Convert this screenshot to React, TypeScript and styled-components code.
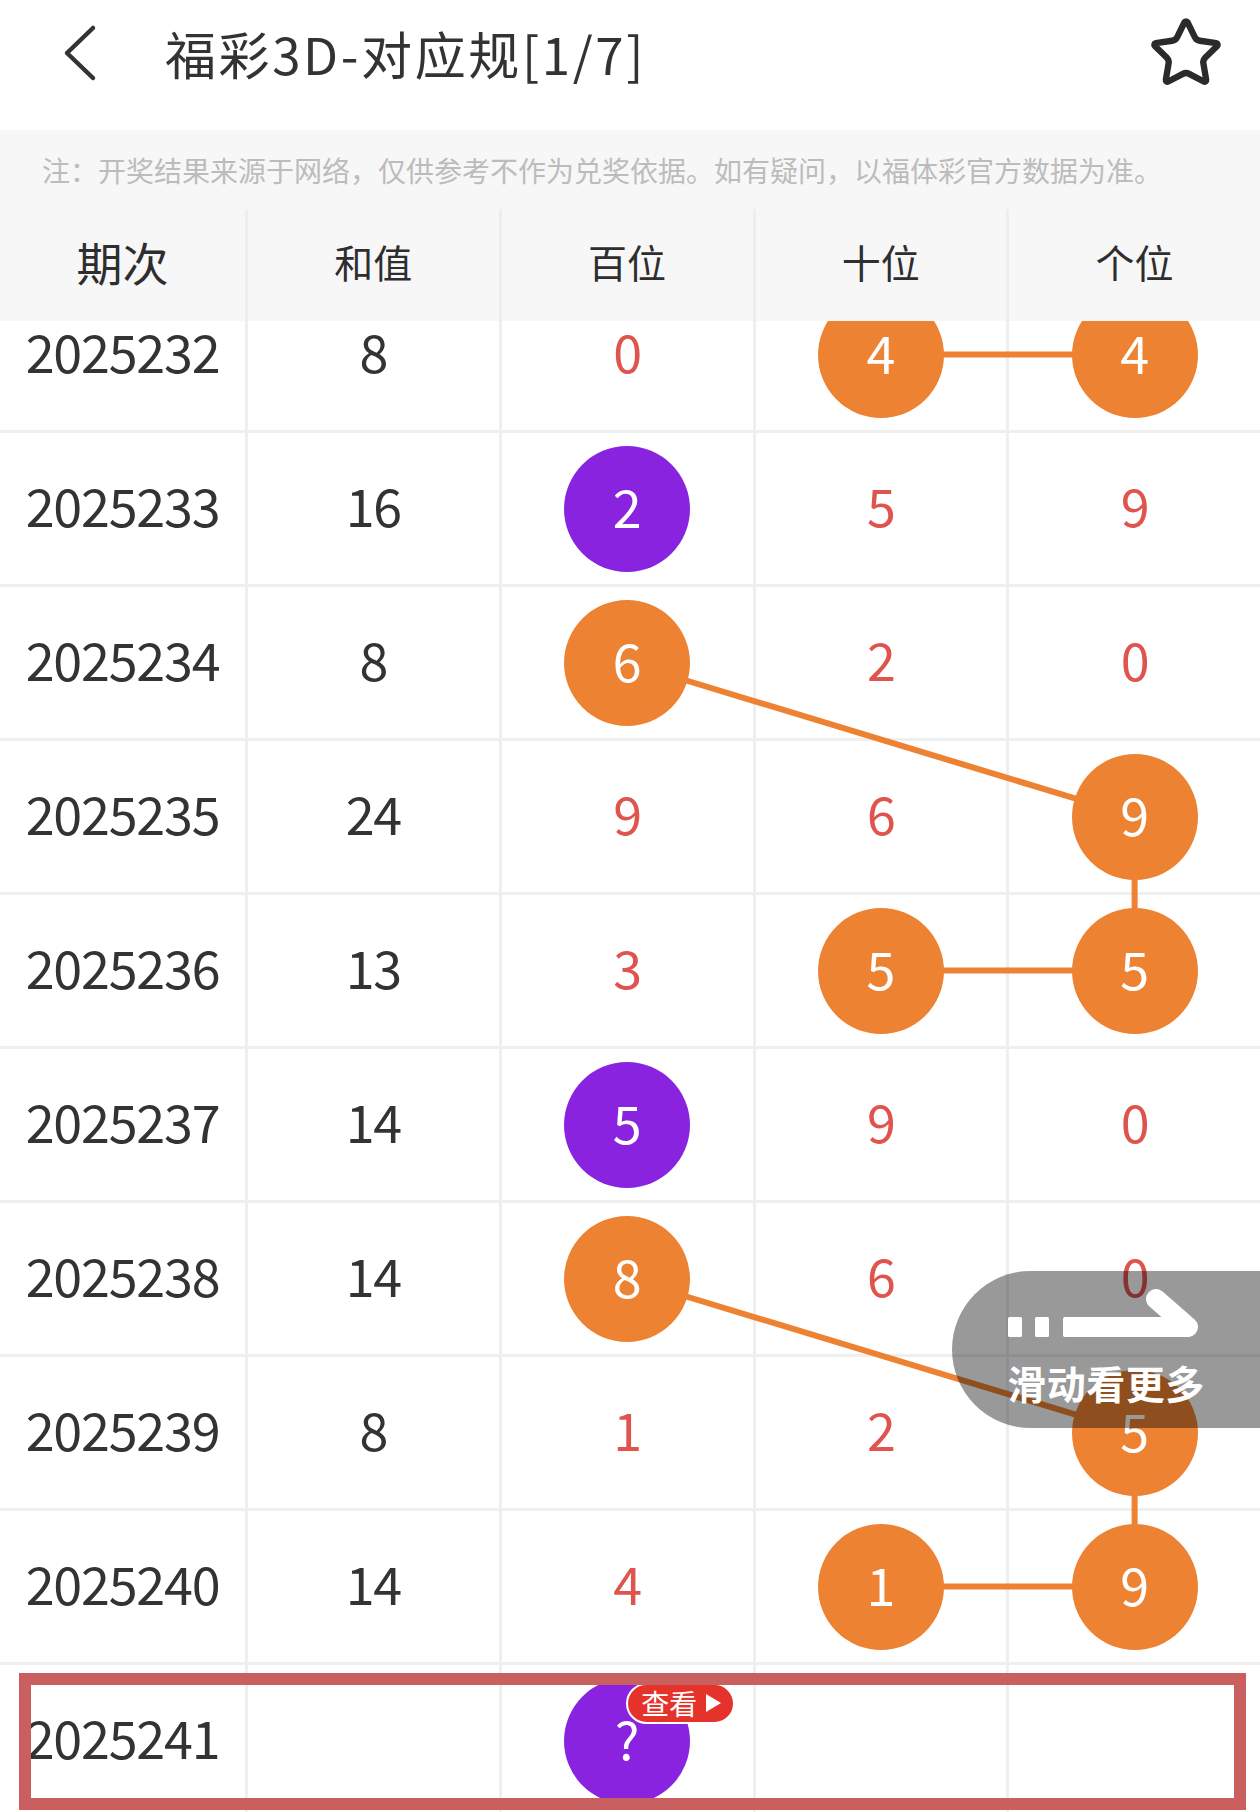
import React from 'react';
import styled, { createGlobalStyle } from 'styled-components';

const GlobalStyle = createGlobalStyle`
  html, body {
    margin: 0;
    padding: 0;
    background: #ffffff;
  }
  body {
    font-family: "Noto Sans CJK SC", "Noto Sans", sans-serif;
    color: #333333;
  }
  * { box-sizing: border-box; }
`;

const ORANGE = '#ed8232';
const PURPLE = '#8a23e0';
const RED_TEXT = '#e0544e';
const GRID_LINE = '#efefef';

const FIRST_COL = 245;
const GAP = 3;
const ROW_H = 151;
const PAGE_W = 1260;
const COL_W = (PAGE_W - FIRST_COL - GAP * 4) / 4;

const Page = styled.div`
  position: relative;
  width: 1260px;
  height: 1812px;
  overflow: hidden;
  display: flex;
  flex-direction: column;
  background: #ffffff;
`;

const TopBar = styled.header`
  height: 130px;
  flex: none;
  display: flex;
  align-items: center;
  padding: 0 36px 24px 60px;
  background: #ffffff;
`;

const BackIcon = styled.svg`
  width: 40px;
  height: 60px;
  flex: none;
`;

const Title = styled.h1`
  margin: 0 0 0 65px;
  font-size: 51px;
  font-weight: 400;
  color: #333333;
  letter-spacing: 2.6px;
  line-height: 1;
`;

const StarIcon = styled.svg`
  margin-left: auto;
  width: 76px;
  height: 76px;
  flex: none;
`;

const Notice = styled.div`
  height: 79px;
  flex: none;
  display: flex;
  align-items: center;
  padding-left: 42px;
  background: #f7f7f7;
  color: #bcbcbc;
  font-size: 28px;
  white-space: nowrap;
`;

const HeadRow = styled.div`
  height: 112px;
  flex: none;
  display: grid;
  grid-template-columns: ${FIRST_COL}px repeat(4, 1fr);
  column-gap: ${GAP}px;
  background: #eeeeee;
`;

const HeadCell = styled.div<{ $big?: boolean }>`
  display: flex;
  align-items: center;
  justify-content: center;
  padding-bottom: 9px;
  background: #f7f7f7;
  font-size: ${(p) => (p.$big ? '46px' : '39px')};
  color: #2e2e2e;
`;

const Body = styled.div`
  flex: 1;
  overflow: hidden;
  background: #ffffff;
`;

const RowsWrap = styled.div`
  position: relative;
  margin-top: -42px;
  display: flex;
  flex-direction: column;
  row-gap: ${GAP}px;
  background: ${GRID_LINE};
`;

const LineLayer = styled.svg`
  position: absolute;
  inset: 0;
  width: 100%;
  height: 100%;
  z-index: 1;
  pointer-events: none;
`;

const Row = styled.div`
  position: relative;
  height: ${ROW_H}px;
  display: grid;
  grid-template-columns: ${FIRST_COL}px repeat(4, 1fr);
  column-gap: ${GAP}px;
`;

const Cell = styled.div`
  display: flex;
  align-items: center;
  justify-content: center;
  background: #ffffff;
`;

const Num = styled.span<{ $tone: 'dark' | 'red' }>`
  font-size: 52px;
  line-height: 1;
  letter-spacing: -1.2px;
  margin-bottom: 8px;
  color: ${(p) => (p.$tone === 'red' ? RED_TEXT : '#333333')};
`;

const Ball = styled.div<{ $tone: 'orange' | 'purple' }>`
  position: relative;
  z-index: 2;
  width: 126px;
  height: 126px;
  border-radius: 50%;
  background: ${(p) => (p.$tone === 'orange' ? ORANGE : PURPLE)};
  color: #ffffff;
  font-size: 52px;
  line-height: 1;
  padding-bottom: 5px;
  display: flex;
  align-items: center;
  justify-content: center;
`;

const ViewBadge = styled.div`
  position: absolute;
  left: 62px;
  top: 5px;
  height: 41px;
  padding: 0 12px 0 13px;
  display: flex;
  align-items: center;
  gap: 9px;
  border: 2px solid #ffffff;
  border-radius: 21px;
  background: #e5322a;
  color: #ffffff;
  font-size: 28px;
  white-space: nowrap;
`;

const PlayTri = styled.span`
  width: 0;
  height: 0;
  border-top: 9px solid transparent;
  border-bottom: 9px solid transparent;
  border-left: 15px solid #ffffff;
`;

const Highlight = styled.div`
  position: absolute;
  top: 8px;
  left: 19px;
  right: 14px;
  bottom: 6px;
  border: 12px solid #c95f5f;
  z-index: 3;
  pointer-events: none;
`;

const SwipeHint = styled.div`
  position: absolute;
  left: 952px;
  right: 0;
  top: 1271px;
  height: 157px;
  z-index: 10;
  border-radius: 78.5px 0 0 78.5px;
  background: rgba(0, 0, 0, 0.4);
  display: flex;
  flex-direction: column;
  align-items: center;
  padding-top: 18px;
`;

const SwipeIcon = styled.svg`
  width: 200px;
  height: 50px;
  flex: none;
`;

const SwipeText = styled.div`
  margin-top: 20px;
  font-size: 39px;
  font-weight: 700;
  color: #ffffff;
  line-height: 47px;
  letter-spacing: 0.5px;
`;

type Tone = 'orange' | 'purple' | undefined;
type Digit = { v: string; b?: Tone };
type RowData = { period: string; sum: string; digits: Digit[]; last?: boolean };

const rows: RowData[] = [
  { period: '2025232', sum: '8', digits: [{ v: '0' }, { v: '4', b: 'orange' }, { v: '4', b: 'orange' }] },
  { period: '2025233', sum: '16', digits: [{ v: '2', b: 'purple' }, { v: '5' }, { v: '9' }] },
  { period: '2025234', sum: '8', digits: [{ v: '6', b: 'orange' }, { v: '2' }, { v: '0' }] },
  { period: '2025235', sum: '24', digits: [{ v: '9' }, { v: '6' }, { v: '9', b: 'orange' }] },
  { period: '2025236', sum: '13', digits: [{ v: '3' }, { v: '5', b: 'orange' }, { v: '5', b: 'orange' }] },
  { period: '2025237', sum: '14', digits: [{ v: '5', b: 'purple' }, { v: '9' }, { v: '0' }] },
  { period: '2025238', sum: '14', digits: [{ v: '8', b: 'orange' }, { v: '6' }, { v: '0' }] },
  { period: '2025239', sum: '8', digits: [{ v: '1' }, { v: '2' }, { v: '5', b: 'orange' }] },
  { period: '2025240', sum: '14', digits: [{ v: '4' }, { v: '1', b: 'orange' }, { v: '9', b: 'orange' }] },
  { period: '2025241', sum: '', digits: [{ v: '?', b: 'purple' }, { v: '' }, { v: '' }], last: true },
];

// [row, col] pairs, col 2 = 百, 3 = 十, 4 = 个
const links: [number, number, number, number][] = [
  [0, 3, 0, 4],
  [2, 2, 3, 4],
  [3, 4, 4, 4],
  [4, 3, 4, 4],
  [6, 2, 7, 4],
  [7, 4, 8, 4],
  [8, 3, 8, 4],
];

const colX = (c: number) =>
  c === 0 ? FIRST_COL / 2 : FIRST_COL + GAP + (c - 1) * (COL_W + GAP) + COL_W / 2;
const rowY = (r: number) => r * (ROW_H + GAP) + ROW_H / 2;
const GRID_H = rows.length * ROW_H + (rows.length - 1) * GAP;

function DigitCell({ d, last }: { d: Digit; last?: boolean }) {
  return (
    <Cell>
      {d.b ? (
        <Ball $tone={d.b}>
          {d.v}
          {last && (
            <ViewBadge>
              查看
              <PlayTri />
            </ViewBadge>
          )}
        </Ball>
      ) : (
        <Num $tone="red">{d.v}</Num>
      )}
    </Cell>
  );
}

export default function App() {
  return (
    <>
      <GlobalStyle />
      <Page>
        <TopBar>
          <BackIcon viewBox="0 0 40 60">
            <path
              d="M33 5 L7 30 L33 55"
              fill="none"
              stroke="#333333"
              strokeWidth="4.5"
              strokeLinecap="round"
              strokeLinejoin="round"
            />
          </BackIcon>
          <Title>福彩3D-对应规[1/7]</Title>
          <StarIcon viewBox="0 0 24 24">
            <path
              d="M11.525 2.295a.53.53 0 0 1 .95 0l2.31 4.679a2.123 2.123 0 0 0 1.595 1.16l5.166.756a.53.53 0 0 1 .294.904l-3.736 3.638a2.123 2.123 0 0 0-.611 1.878l.882 5.14a.53.53 0 0 1-.771.56l-4.618-2.428a2.122 2.122 0 0 0-1.973 0L6.396 21.01a.53.53 0 0 1-.77-.56l.881-5.139a2.122 2.122 0 0 0-.611-1.879L2.16 9.795a.53.53 0 0 1 .294-.906l5.165-.755a2.122 2.122 0 0 0 1.597-1.16z"
              fill="none"
              stroke="#2b2b2b"
              strokeWidth="2"
              strokeLinejoin="round"
            />
          </StarIcon>
        </TopBar>

        <Notice>注：开奖结果来源于网络，仅供参考不作为兑奖依据。如有疑问，以福体彩官方数据为准。</Notice>

        <HeadRow>
          <HeadCell $big>期次</HeadCell>
          <HeadCell>和值</HeadCell>
          <HeadCell>百位</HeadCell>
          <HeadCell>十位</HeadCell>
          <HeadCell>个位</HeadCell>
        </HeadRow>

        <Body>
          <RowsWrap>
            <LineLayer viewBox={`0 0 ${PAGE_W} ${GRID_H}`} preserveAspectRatio="none">
              {links.map(([r1, c1, r2, c2], i) => (
                <line
                  key={i}
                  x1={colX(c1)}
                  y1={rowY(r1)}
                  x2={colX(c2)}
                  y2={rowY(r2)}
                  stroke={ORANGE}
                  strokeWidth="6"
                />
              ))}
            </LineLayer>
            {rows.map((row) => (
              <Row key={row.period}>
                <Cell>
                  <Num $tone="dark">{row.period}</Num>
                </Cell>
                <Cell>
                  <Num $tone="dark">{row.sum}</Num>
                </Cell>
                {row.digits.map((d, i) => (
                  <DigitCell key={i} d={d} last={row.last && i === 0} />
                ))}
                {row.last && <Highlight />}
              </Row>
            ))}
          </RowsWrap>
        </Body>

        <SwipeHint>
          <SwipeIcon viewBox="0 0 200 50">
            <rect x="2" y="28" width="14" height="20" rx="1.5" fill="#ffffff" />
            <rect x="29" y="28" width="14" height="20" rx="1.5" fill="#ffffff" />
            <rect x="57" y="28" width="127" height="20" rx="2" fill="#ffffff" />
            <path
              d="M182 38 L150 10"
              fill="none"
              stroke="#ffffff"
              strokeWidth="20"
              strokeLinecap="round"
            />
          </SwipeIcon>
          <SwipeText>滑动看更多</SwipeText>
        </SwipeHint>
      </Page>
    </>
  );
}
